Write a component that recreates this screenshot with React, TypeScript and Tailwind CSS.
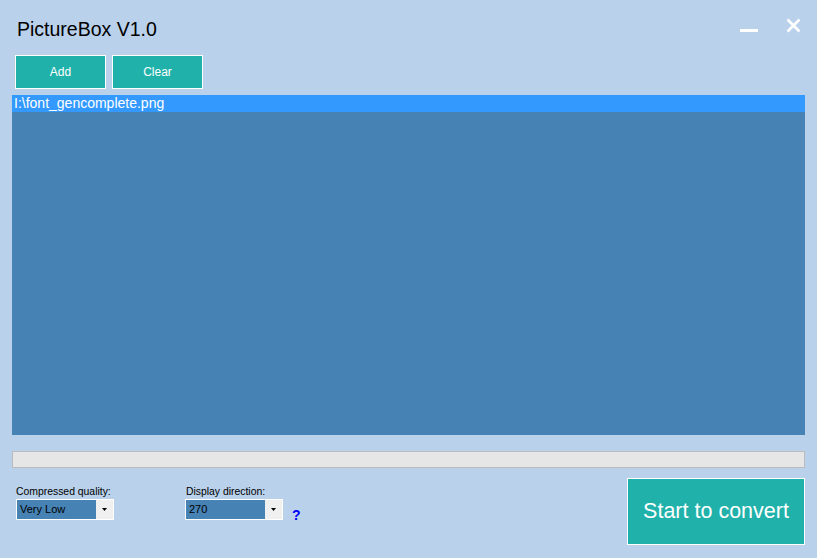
import React from "react";

function Combo({ value }: { value: string }) {
  return (
    <div className="flex h-[21px] w-[98px] border border-white bg-white">
      <div className="flex flex-1 items-center bg-[#4682B4] pl-[3px] text-[11px] text-black">{value}</div>
      <div className="flex w-[17px] items-center justify-center bg-[#F0F0F0]">
        <svg width="5" height="3" viewBox="0 0 5 3"><path d="M0 0h5L2.5 3z" fill="#000" /></svg>
      </div>
    </div>
  );
}

export default function App() {
  return (
    <div
      className="flex h-[558px] w-[817px] flex-col bg-[#B9D1EA]"
      style={{ fontFamily: '"Liberation Sans", Arial, sans-serif' }}
    >
      <div className="flex h-[55px] items-start">
        <div className="pl-[17px] pt-[17px] text-[19.5px] leading-[24px] text-black">PictureBox V1.0</div>
        <div className="ml-auto flex items-start gap-[28px] pr-[16px] pt-[18px]">
          <div className="mt-[11px] h-[3px] w-[18px] bg-white" />
          <svg width="15" height="15" viewBox="0 0 15 15">
            <path d="M1.5 1.5L13.5 13.5M13.5 1.5L1.5 13.5" stroke="#fff" strokeWidth="2.6" />
          </svg>
        </div>
      </div>
      <div className="flex gap-[6px] pl-[15px]">
        <button className="flex h-[34px] w-[91px] items-center justify-center border border-white bg-[#20B2AA] text-[12px] text-white">Add</button>
        <button className="flex h-[34px] w-[91px] items-center justify-center border border-white bg-[#20B2AA] text-[12px] text-white">Clear</button>
      </div>
      <div className="mx-[12px] mt-[6px] h-[340px] bg-[#4682B4]">
        <div className="h-[17px] bg-[#3399FF] pl-[2px] text-[14px] leading-[17px] text-white">I:\font_gencomplete.png</div>
      </div>
      <div className="mx-[12px] mt-[16px] h-[17px] border border-[#BCBCBC] bg-[#E6E6E6]" />
      <div className="flex pl-[16px] pr-[12px] pt-[10px]">
        <div className="flex w-[98px] flex-col pt-[6px]">
          <div className="h-[15px] whitespace-nowrap text-[10.4px] leading-[15px] text-black">Compressed quality:</div>
          <Combo value="Very Low" />
        </div>
        <div className="ml-[71px] flex w-[98px] flex-col pt-[6px]">
          <div className="h-[15px] whitespace-nowrap pl-[1px] text-[10.4px] leading-[15px] text-black">Display direction:</div>
          <Combo value="270" />
        </div>
        <div className="ml-[9px] pt-[30px] text-[14px] font-bold leading-[14px] text-[#0000FF]">?</div>
        <button className="ml-auto flex h-[67px] w-[178px] items-center justify-center border border-white bg-[#20B2AA] text-[21.5px] text-white">Start to convert</button>
      </div>
    </div>
  );
}
